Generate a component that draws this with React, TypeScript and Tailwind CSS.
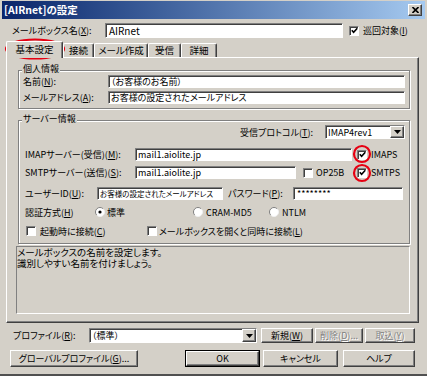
import React from 'react'

const sunken =
  'bg-white border border-t-[#808080] border-l-[#808080] border-r-white border-b-white shadow-[inset_1px_1px_0_#404040]'
const raised =
  'bg-[#d4d0c8] border border-t-white border-l-white border-r-[#404040] border-b-[#404040] shadow-[inset_-1px_-1px_0_#808080]'
const group =
  'border border-[#808080] shadow-[inset_1px_1px_0_white,1px_1px_0_white] flex flex-col'

const Check = ({ on }: { on?: boolean }) => (
  <span className={`w-[10px] h-[10px] shrink-0 flex items-center justify-center ${sunken}`}>
    {on && (
      <svg width="7" height="7" viewBox="0 0 7 7">
        <path d="M0.8 3.2 L2.6 5.2 L6.3 1.2" stroke="black" strokeWidth="1.6" fill="none" />
      </svg>
    )}
  </span>
)

const Radio = ({ on }: { on?: boolean }) => (
  <svg width="10" height="10" viewBox="0 0 10 10" className="shrink-0">
    <circle cx="5" cy="5" r="4.5" fill="white" />
    <path d="M1.8 8.2 A4.5 4.5 0 0 1 8.2 1.8" stroke="#808080" fill="none" />
    <path d="M8.2 1.8 A4.5 4.5 0 0 1 1.8 8.2" stroke="#f0f0f0" fill="none" />
    {on && <circle cx="5" cy="5" r="1.6" fill="black" />}
  </svg>
)

const Arrow = () => (
  <span className={`w-[14px] h-full shrink-0 flex items-center justify-center ${raised}`}>
    <svg width="7" height="4" viewBox="0 0 7 4">
      <path d="M0 0 H7 L3.5 4 Z" fill="black" />
    </svg>
  </span>
)

const Btn = ({ w, children, off }: { w: string; children: React.ReactNode; off?: boolean }) => (
  <div
    className={`${w} h-full flex items-center justify-center ${raised} ${
      off ? 'text-[#808080] [text-shadow:1px_1px_0_white]' : ''
    }`}
  >
    {children}
  </div>
)

export default function App() {
  return (
    <div className="w-[427px] h-[376px] bg-[#d4d0c8] text-black text-[9px] leading-none whitespace-nowrap font-['Noto_Sans_CJK_JP',sans-serif] [font-feature-settings:'palt'] flex flex-col relative overflow-hidden border-b-2 border-b-[#505050]">
      {/* title bar */}
      <div className="mx-[2px] mt-[1px] h-[18px] bg-linear-to-r from-[#0a246a] to-[#a6caf0] flex items-center pl-[2px] pr-[3px]">
        <span className="text-white font-bold text-[10.5px]">[AIRnet]の設定</span>
        <span className={`ml-auto w-[14px] h-[12px] flex items-center justify-center ${raised}`}>
          <svg width="7" height="6" viewBox="0 0 7 6">
            <path d="M0.5 0 L6.5 6 M6.5 0 L0.5 6" stroke="black" strokeWidth="1.6" />
          </svg>
        </span>
      </div>

      <div className="mt-[4px] h-[15px] flex items-center pl-[12px]">
        <span className="w-[93px]">
          メールボックス名(<u>X</u>):
        </span>
        <div className={`w-[238px] h-[15px] flex items-center pl-[3px] text-[10px] ${sunken}`}>AIRnet</div>
        <span className="ml-[6px]">
          <Check on />
        </span>
        <span className="ml-[4px]">
          巡回対象(<u>I</u>)
        </span>
      </div>

      {/* tabs */}
      <div className="mt-[3px] ml-[6px] h-[16px] flex items-end relative z-10">
        <div className="w-[57px] h-[17px] -mb-[1px] bg-[#d4d0c8] border-t border-l border-r border-t-white border-l-white border-r-[#404040] shadow-[inset_-1px_0_0_#808080] rounded-t-[2px] flex items-center justify-center text-[9.5px]">
          基本設定
        </div>
        {[
          ['接続', 'w-[31px]'],
          ['メール作成', 'w-[54px]'],
          ['受信', 'w-[33px]'],
          ['詳細', 'w-[36px]'],
        ].map(([t, w]) => (
          <div
            key={t}
            className={`${w} h-[14px] border-t border-l border-r border-t-white border-l-white border-r-[#404040] shadow-[inset_-1px_0_0_#808080] rounded-t-[2px] flex items-center justify-center text-[9.5px]`}
          >
            {t}
          </div>
        ))}
      </div>

      {/* tab panel */}
      <div className="ml-[6px] w-[413px] h-[266px] border border-t-white border-l-white border-r-[#404040] border-b-[#404040] shadow-[inset_-1px_-1px_0_#808080] flex flex-col">
        <div className={`mt-[12px] ml-[11px] mr-[8px] px-[4px] pb-[4px] ${group}`}>
          <span className="-mt-[8px] -ml-[1px] self-start h-[12px] leading-[12px] px-[1px] bg-[#d4d0c8]">
            個人情報
          </span>
          <div className="h-[13px] flex items-center">
            <span className="w-[85px]">
              名前(<u>N</u>):
            </span>
            <div className={`flex-1 h-full flex items-center pl-[2px] ${sunken}`}>（お客様のお名前）</div>
          </div>
          <div className="mt-[3px] h-[13px] flex items-center">
            <span className="w-[85px]">
              メールアドレス(<u>A</u>):
            </span>
            <div className={`flex-1 h-full flex items-center pl-[2px] ${sunken}`}>
              お客様の設定されたメールアドレス
            </div>
          </div>
        </div>

        <div className={`mt-[11px] ml-[11px] mr-[8px] pl-[6px] pr-[4px] pb-[7px] ${group}`}>
          <span className="-mt-[8px] -ml-[3px] self-start h-[12px] leading-[12px] px-[1px] bg-[#d4d0c8]">
            サーバー情報
          </span>
          <div className="h-[14px] flex items-center justify-end">
            <span>
              受信プロトコル(<u>T</u>):
            </span>
            <div className={`ml-[12px] w-[80px] h-full flex items-center pl-[2px] ${sunken}`}>
              <span className="flex-1">IMAP4rev1</span>
              <Arrow />
            </div>
          </div>
          <div className="mt-[9px] h-[13px] flex items-center">
            <span className="w-[110px]">
              IMAPサーバー(受信)(<u>M</u>):
            </span>
            <div className={`w-[217px] h-full flex items-center pl-[2px] ${sunken}`}>mail1.aiolite.jp</div>
            <span className="ml-[5px]">
              <Check on />
            </span>
            <span className="ml-[4px]">IMAPS</span>
          </div>
          <div className="mt-[5px] h-[13px] flex items-center">
            <span className="w-[110px]">
              SMTPサーバー(送信)(<u>S</u>):
            </span>
            <div className={`w-[161px] h-full flex items-center pl-[2px] ${sunken}`}>mail1.aiolite.jp</div>
            <div className="ml-[7px] w-[54px] flex items-center">
              <Check />
              <span className="ml-[3px]">OP25B</span>
            </div>
            <Check on />
            <span className="ml-[4px]">SMTPS</span>
          </div>
          <div className="mt-[8px] h-[13px] flex items-center">
            <span className="w-[72px]">
              ユーザーID(<u>U</u>):
            </span>
            <div className={`w-[126px] h-full flex items-center pl-[2px] text-[7.5px] overflow-hidden ${sunken}`}>
              お客様の設定されたメールアドレス
            </div>
            <span className="ml-[5px] w-[65px]">
              パスワード(<u>P</u>):
            </span>
            <div className={`w-[110px] h-full flex items-center pl-[3px] ${sunken}`}>********</div>
          </div>
          <div className="mt-[6px] h-[12px] flex items-center">
            <span className="w-[70px]">
              認証方式(<u>H</u>)
            </span>
            <div className="w-[98px] flex items-center">
              <Radio on />
              <span className="ml-[2px]">標準</span>
            </div>
            <div className="w-[76px] flex items-center">
              <Radio />
              <span className="ml-[3px]">CRAM-MD5</span>
            </div>
            <Radio />
            <span className="ml-[3px]">NTLM</span>
          </div>
          <div className="mt-[8px] ml-[1px] h-[10px] flex items-center">
            <div className="w-[121px] flex items-center">
              <Check />
              <span className="ml-[4px]">
                起動時に接続(<u>C</u>)
              </span>
            </div>
            <Check />
            <span className="ml-[2px]">
              メールボックスを開くと同時に接続(<u>L</u>)
            </span>
          </div>
        </div>

        <div className="mt-[2px] ml-[9px] mr-[8px] h-[68px] border border-t-[#808080] border-l-[#808080] border-r-white border-b-white text-[9.5px] leading-[11px]">
          <p>メールボックスの名前を設定します。</p>
          <p>識別しやすい名前を付けましょう。</p>
        </div>
      </div>

      {/* profile row */}
      <div className="mt-[5px] h-[15px] flex items-center pl-[13px]">
        <span className="w-[76px]">
          プロファイル(<u>R</u>):
        </span>
        <div className={`w-[168px] h-full flex items-center pl-[2px] ${sunken}`}>
          <span className="flex-1">（標準）</span>
          <Arrow />
        </div>
        <div className="ml-[4px] h-full flex">
          <Btn w="w-[52px]">
            新規(<u>W</u>)
          </Btn>
        </div>
        <div className="ml-[2px] h-full flex">
          <Btn w="w-[48px]" off>
            削除(<u>D</u>)...
          </Btn>
        </div>
        <div className="ml-[2px] h-full flex">
          <Btn w="w-[50px]" off>
            取込(<u>Y</u>)
          </Btn>
        </div>
      </div>

      {/* buttons */}
      <div className="mt-[7px] h-[17px] flex">
        <div className="ml-[10px] h-full flex">
          <Btn w="w-[128px]">
            グローバルプロファイル(<u>G</u>)...
          </Btn>
        </div>
        <div className="ml-[47px] w-[75px] h-full border border-black flex">
          <Btn w="w-full">OK</Btn>
        </div>
        <div className="ml-[3px] h-full flex">
          <Btn w="w-[75px]">キャンセル</Btn>
        </div>
        <div className="ml-[5px] h-full flex">
          <Btn w="w-[72px]">ヘルプ</Btn>
        </div>
      </div>

      {/* red annotation marks */}
      <svg className="absolute left-0 top-0 pointer-events-none" width="427" height="376">
        <ellipse cx="35" cy="49" rx="29" ry="9.5" stroke="#e60012" strokeWidth="2.2" fill="none" />
        <circle cx="362" cy="154" r="8" stroke="#e60012" strokeWidth="2.2" fill="none" />
        <circle cx="362" cy="173" r="8" stroke="#e60012" strokeWidth="2.2" fill="none" />
      </svg>
    </div>
  )
}
